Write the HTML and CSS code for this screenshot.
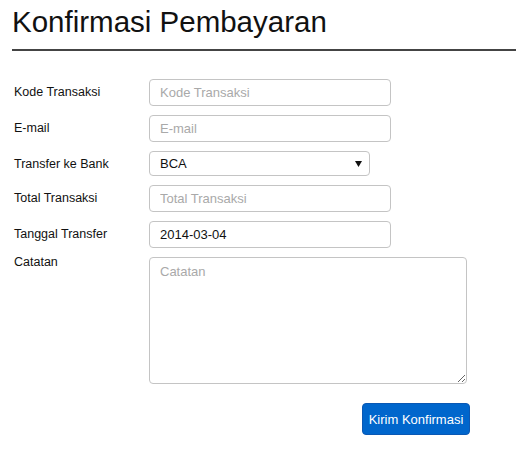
FILE: index.html
```html
<!DOCTYPE html>
<html>
<head>
<meta charset="utf-8">
<link rel="stylesheet" href="styles.css">
</head>
<body>
<h1 class="title">Konfirmasi Pembayaran</h1>
<form class="form">
  <div class="row">
    <label class="label">Kode Transaksi</label>
    <input class="field" type="text" placeholder="Kode Transaksi">
  </div>
  <div class="row">
    <label class="label">E-mail</label>
    <input class="field" type="text" placeholder="E-mail">
  </div>
  <div class="row">
    <label class="label">Transfer ke Bank</label>
    <span class="select-wrap">
      <select class="select"><option>BCA</option></select>
      <svg class="caret" width="7" height="6" viewBox="0 0 7 6"><path d="M0 0H7L3.5 6Z" fill="#111"/></svg>
    </span>
  </div>
  <div class="row">
    <label class="label">Total Transaksi</label>
    <input class="field" type="text" placeholder="Total Transaksi">
  </div>
  <div class="row">
    <label class="label">Tanggal Transfer</label>
    <input class="field" type="text" value="2014-03-04">
  </div>
  <div class="row">
    <label class="label label-top">Catatan</label>
    <textarea class="area" placeholder="Catatan"></textarea>
  </div>
  <div class="actions">
    <button class="btn" type="button">Kirim Konfirmasi</button>
  </div>
</form>
</body>
</html>
```
FILE: styles.css
```css
html, body {
  margin: 0;
  padding: 0;
  background: #fff;
  font-family: "Liberation Sans", Arial, sans-serif;
  color: #111;
}
.title {
  margin: 0 0 0 12px;
  padding: 4px 0 9px 0;
  font-size: 29.5px;
  line-height: 36px;
  font-weight: normal;
  color: #111;
  border-bottom: 2px solid #444;
}
.form {
  margin-top: 28px;
  display: flex;
  flex-direction: column;
  gap: 9px;
}
.row {
  display: flex;
  align-items: flex-start;
}
.label {
  width: 135px;
  padding-left: 14px;
  padding-top: 5px;
  font-size: 12.5px;
  line-height: 16px;
  color: #111;
}
.label-top {
  padding-top: 0;
  margin-top: -3px;
}
.field {
  box-sizing: border-box;
  width: 242px;
  height: 27px;
  margin: 0;
  padding: 0 10px;
  border: 1px solid #c4c4c4;
  border-radius: 4px;
  font-family: "Liberation Sans", Arial, sans-serif;
  font-size: 13px;
  color: #111;
  outline: none;
}
.field::placeholder, .area::placeholder {
  color: #a9a9a9;
}
.select-wrap {
  position: relative;
  display: block;
  width: 221px;
  height: 25px;
}
.select {
  box-sizing: border-box;
  width: 221px;
  height: 25px;
  margin: 0;
  padding: 0 10px;
  border: 1px solid #c4c4c4;
  border-radius: 4px;
  background: #fff;
  -webkit-appearance: none;
  appearance: none;
  font-family: "Liberation Sans", Arial, sans-serif;
  font-size: 13px;
  color: #111;
  outline: none;
}
.caret {
  position: absolute;
  right: 8px;
  top: 10px;
  pointer-events: none;
}
.area {
  box-sizing: border-box;
  width: 318px;
  height: 127px;
  margin: 0;
  padding: 6px 10px;
  border: 1px solid #c4c4c4;
  border-radius: 4px;
  font-family: "Liberation Sans", Arial, sans-serif;
  font-size: 13px;
  color: #111;
  outline: none;
}
.actions {
  display: flex;
  justify-content: flex-end;
  width: 470px;
  margin-top: 10px;
}
.btn {
  box-sizing: border-box;
  width: 108px;
  height: 32px;
  border: 1px solid #0a58b4;
  border-radius: 4px;
  background: #0066cc;
  color: #fff;
  font-family: "Liberation Sans", Arial, sans-serif;
  font-size: 13px;
  padding: 0;
}
```
